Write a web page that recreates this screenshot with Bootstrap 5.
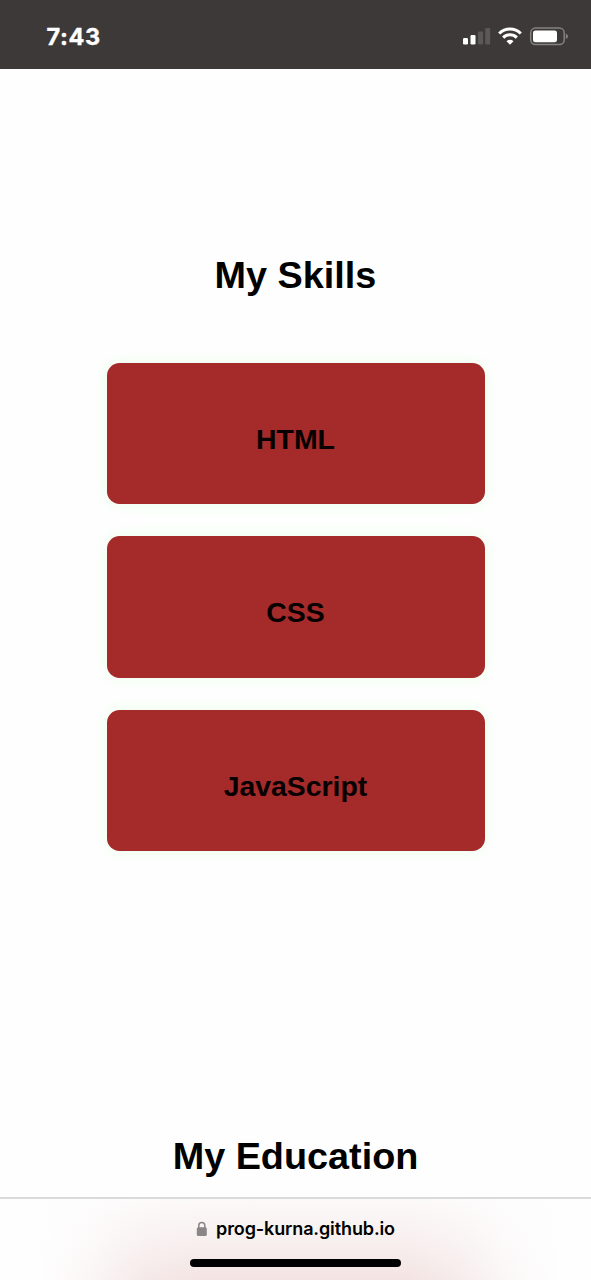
<!DOCTYPE html>
<html lang="en">
<head>
<meta charset="utf-8">
<meta name="viewport" content="width=device-width, initial-scale=1">
<title>My Skills</title>
<link href="https://cdn.jsdelivr.net/npm/bootstrap@5.3.0/dist/css/bootstrap.min.css" rel="stylesheet">
<style>
body{font-family:"Liberation Sans",Arial,sans-serif;height:1280px;color:#000;background:#fefefe}
.status-bar{height:69.4px;background:#3d3938;padding:4px 23px 0 46.5px;font-family:Inter,sans-serif}
.clock{font-size:23.5px;font-weight:700;line-height:30px;letter-spacing:.6px;-webkit-text-stroke:.4px #fff}
.section-title{font-size:37.8px;font-weight:700;line-height:44px}
.skills{padding-top:183.6px}
.skill-list{width:378px;gap:31.7px;margin-top:65.8px}
.skill-card{height:141.7px;border:0;border-radius:12.6px;background:#a52a2a;box-shadow:0 0 16px rgba(0,255,0,.09);color:#000;padding-top:10.4px}
.skill-card h3{font-size:28.4px;font-weight:700;line-height:34px;color:#060000}
.my-education{padding-bottom:15px}
.address-bar{height:83px;border-top:2px solid #dadadb;background:linear-gradient(rgba(254,254,254,.82),rgba(254,254,254,.45) 50%,transparent),linear-gradient(90deg,#fefefe 40px,#fbf6f6 90px,#f5e9e8 145px,#f3e4e3 200px,#f3e4e3 410px,#f6ebea 455px,#fbf7f7 505px,#fefefe 560px);font-family:Inter,sans-serif}
.address{padding-top:18px;gap:8px;height:42px;font-size:18px;font-weight:600;line-height:24px;letter-spacing:-.12px}
.home-indicator{width:211px;height:8px;border-radius:4px;background:#000;margin-top:17.5px}
</style>
</head>
<body class="d-flex flex-column overflow-hidden m-0">
<header class="status-bar d-flex align-items-center justify-content-between flex-shrink-0 text-white">
  <span class="clock">7:43</span>
  <svg width="105" height="20" viewBox="0 0 105 20" aria-label="Signal, Wi-Fi and battery">
    <g fill="#fff"><rect x="0" y="11" width="5" height="6.5" rx="1.3"/><rect x="7.5" y="8" width="5" height="9.5" rx="1.3"/><g fill="#5c5857"><rect x="15" y="4.5" width="5" height="13" rx="1.3"/><rect x="22.2" y="1" width="5" height="16.5" rx="1.3"/></g></g>
    <g fill="none" stroke="#fff" stroke-width="3.1"><path d="M36.2 6.5a15.3 15.3 0 0 1 21.6 0"/><path d="M40.2 10.6a9.6 9.6 0 0 1 13.6 0"/></g>
    <path fill="#fff" d="M47 17.8l-3.5-3.5a5 5 0 0 1 7 0z"/>
    <rect x="67.7" y="1.1" width="33.5" height="16.5" rx="4.8" fill="none" stroke="#858180" stroke-width="1.5"/>
    <rect x="70" y="3.4" width="24" height="11.9" rx="2.4" fill="#fff"/>
    <path fill="#858180" d="M102.8 6.5q2.2.9 2.2 2.8t-2.2 2.8z"/>
  </svg>
</header>
<main class="flex-grow-1 d-flex flex-column align-items-center">
  <section class="skills d-flex flex-column align-items-center">
    <h1 class="section-title text-center mb-0">My Skills</h1>
    <div class="skill-list d-flex flex-column">
      <div class="card skill-card align-items-center justify-content-center"><h3 class="mb-0">HTML</h3></div>
      <div class="card skill-card align-items-center justify-content-center"><h3 class="mb-0">CSS</h3></div>
      <div class="card skill-card align-items-center justify-content-center"><h3 class="mb-0">JavaScript</h3></div>
    </div>
  </section>
  <section class="my-education mt-auto">
    <h1 class="section-title text-center mb-1">My Education</h1>
  </section>
</main>
<footer class="address-bar flex-shrink-0 d-flex flex-column align-items-center">
  <div class="address d-flex align-items-center">
    <svg width="12" height="16" viewBox="0 0 12 16" aria-hidden="true"><rect x=".8" y="6.3" width="10" height="8.6" rx="1.5" fill="#8a8587"/><path d="M2.8 7V4.4a3 3 0 0 1 6 0V7" fill="none" stroke="#8a8587" stroke-width="1.5"/></svg>
    <span>prog-kurna.github.io</span>
  </div>
  <div class="home-indicator"></div>
</footer>
<script src="https://cdn.jsdelivr.net/npm/bootstrap@5.3.0/dist/js/bootstrap.bundle.min.js"></script>
</body>
</html>
